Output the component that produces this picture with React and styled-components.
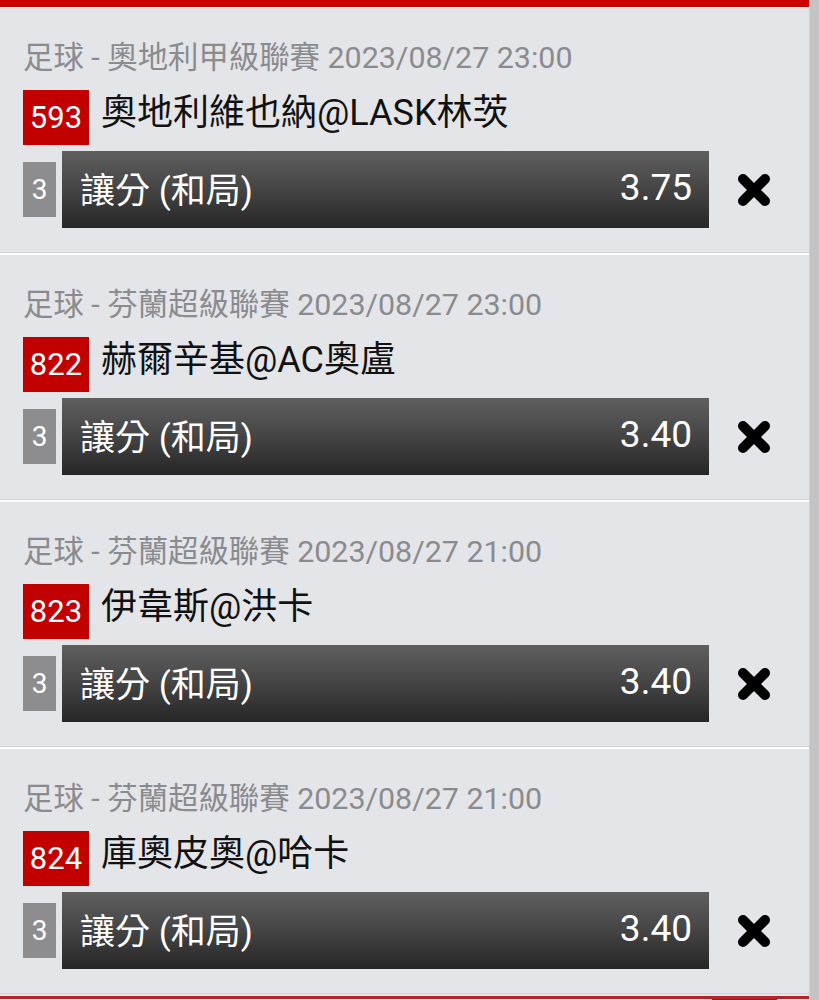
import React from "react";
import styled, { createGlobalStyle } from "styled-components";

const Global = createGlobalStyle`
  html, body { margin: 0; padding: 0; background: #e4e5e9; }
  body { font-family: Roboto, "Noto Sans CJK TC", sans-serif; overflow: hidden; }
`;

const Page = styled.div`
  display: flex;
  width: 819px;
  height: 1000px;
  overflow: hidden;
`;

const Main = styled.div`
  width: 809px;
  display: flex;
  flex-direction: column;
  & > * { flex-shrink: 0; }
`;

const Scrollbar = styled.div`
  width: 10px;
  background: #c4c4c6;
  border-left: 1px solid #cfcfd1;
  box-sizing: border-box;
`;

const TopBar = styled.div`
  height: 6px;
  background: #cc0000;
  border-bottom: 1px solid #b80000;
`;

const List = styled.div`
  display: flex;
  flex-direction: column;
  gap: 2px;
  padding-top: 1px;
  background: #ffffff;
`;

const Card = styled.div`
  background: #e4e5e9;
  padding: 33px 0 24px 23px;
  border-bottom: 1px solid #d2d3d6;
  display: flex;
  flex-direction: column;
`;

const Header = styled.div`
  color: #8a8b8e;
  font-size: 30.4px;
  line-height: 33px;
  height: 32px;
  white-space: nowrap;
`;

const NameRow = styled.div`
  display: flex;
  align-items: center;
  gap: 12px;
  margin-top: 17px;
  height: 55px;
`;

const Badge = styled.div`
  width: 66px;
  height: 55px;
  background: #c20000;
  color: #fff;
  font-size: 31px;
  display: flex;
  align-items: center;
  justify-content: center;
`;

const Teams = styled.div`
  color: #111;
  font-size: 36px;
  line-height: 44px;
  padding-bottom: 9px;
  white-space: nowrap;
`;

const BetRow = styled.div`
  display: flex;
  align-items: center;
  margin-top: 6px;
  height: 77px;
`;

const Leg = styled.div`
  width: 33px;
  height: 55px;
  background: #8d8d8f;
  color: #fff;
  font-size: 28px;
  display: flex;
  align-items: center;
  justify-content: center;
  margin-right: 6px;
`;

const Bar = styled.div`
  width: 647px;
  height: 77px;
  box-sizing: border-box;
  padding: 0 17px 4px 18px;
  background: linear-gradient(#5f5f5f, #474747 45%, #262626);
  color: #fff;
  font-size: 35px;
  display: flex;
  align-items: center;
  justify-content: space-between;
`;

const Odds = styled.span`
  font-size: 37px;
`;

const Remove = styled.button`
  margin-left: 27px;
  width: 36px;
  height: 36px;
  padding: 0;
  border: 0;
  background: transparent;
  display: flex;
  align-items: center;
  justify-content: center;
`;

const Footer = styled.div`
  margin-top: 2px;
  height: 60px;
  border-top: 3px solid #b3242a;
  display: flex;
  justify-content: flex-end;
  padding-right: 32px;
`;

const FooterBtn = styled.div`
  width: 65px;
  background: #d20000;
`;

const XIcon = () => (
  <svg width="36" height="36" viewBox="0 0 36 36">
    <g stroke="#000" strokeWidth="10" strokeLinecap="round">
      <line x1="7" y1="7" x2="29" y2="29" />
      <line x1="29" y1="7" x2="7" y2="29" />
    </g>
  </svg>
);

const bets = [
  { league: "足球 - 奧地利甲級聯賽 2023/08/27 23:00", no: "593", teams: "奧地利維也納@LASK林茨", odds: "3.75" },
  { league: "足球 - 芬蘭超級聯賽 2023/08/27 23:00", no: "822", teams: "赫爾辛基@AC奧盧", odds: "3.40" },
  { league: "足球 - 芬蘭超級聯賽 2023/08/27 21:00", no: "823", teams: "伊韋斯@洪卡", odds: "3.40" },
  { league: "足球 - 芬蘭超級聯賽 2023/08/27 21:00", no: "824", teams: "庫奧皮奧@哈卡", odds: "3.40" },
];

export default function App() {
  return (
    <Page>
      <Global />
      <Main>
        <TopBar />
        <List>
          {bets.map((b) => (
            <Card key={b.no}>
              <Header>{b.league}</Header>
              <NameRow>
                <Badge>{b.no}</Badge>
                <Teams>{b.teams}</Teams>
              </NameRow>
              <BetRow>
                <Leg>3</Leg>
                <Bar>
                  <span>讓分 (和局)</span>
                  <Odds>{b.odds}</Odds>
                </Bar>
                <Remove aria-label="remove">
                  <XIcon />
                </Remove>
              </BetRow>
            </Card>
          ))}
        </List>
        <Footer>
          <FooterBtn />
        </Footer>
      </Main>
      <Scrollbar />
    </Page>
  );
}
